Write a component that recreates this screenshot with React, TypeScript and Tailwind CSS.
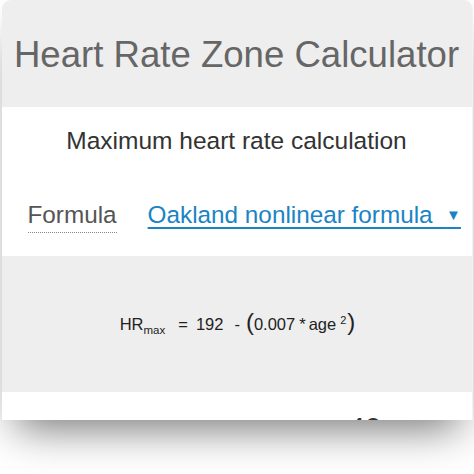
const App = () => {
	return (
		<main className="h-[474px] w-[474px] overflow-hidden bg-white font-['Liberation_Sans',Arial,sans-serif]">
			<section className="relative mx-[1.5px] h-[420px] w-[471px] overflow-hidden rounded-t-[9px] border-r border-[#f2f2f2] bg-white shadow-[0_22px_40px_-14px_rgba(0,0,0,0.55)]">
				<header className="flex h-[107px] items-center justify-center bg-[#eeeeee] pt-[3px]">
					<h1 className="text-[36.6px] text-[#666666]">Heart Rate Zone Calculator</h1>
				</header>

				<div className="flex h-[149px] flex-col">
					<p className="pt-[20px] text-center text-[24.5px] leading-[28px] text-[#333333]">
						Maximum heart rate calculation
					</p>
					<div className="flex items-baseline pl-[26px] pt-[46px]">
						<span className="border-b border-dotted border-[#888] pb-[3px] text-[24.3px] leading-[28px] text-[#555555]">
							Formula
						</span>
						<a className="ml-[31px] text-[24.3px] leading-[28px] text-[#1a84c4] underline decoration-[1.5px] underline-offset-[4px]">
							Oakland nonlinear formula&nbsp;&nbsp;<span className="text-[15px] align-[3px]">▼</span>
						</a>
					</div>
				</div>

				<div className="flex h-[136px] items-center justify-center bg-[#eeeeee] pb-[2px] pl-[2px] text-[#222222]">
					<div className="flex items-baseline text-[16.5px]">
						<span>HR</span>
						<span className="relative top-[4px] text-[11.5px]">max</span>
						<span className="ml-[13px]">=</span>
						<span className="ml-[8px]">192</span>
						<span className="ml-[11px]">-</span>
						<span className="ml-[6px] text-[24px] font-light leading-none">(</span>
						<span>0.007</span>
						<span className="ml-[4px]">*</span>
						<span className="ml-[3px]">age</span>
						<span className="relative top-[-6px] ml-[4px] text-[11px]">2</span>
						<span className="ml-[1px] text-[24px] font-light leading-none">)</span>
					</div>
				</div>

				<div className="flex items-start justify-between pl-[33px] pr-[90px] pt-[21px] text-[#333333]">
					<span className="text-[24px]">Age</span>
					<span className="text-[30px] leading-[30px]">40</span>
				</div>
			</section>
		</main>
	);
};

export default App;
